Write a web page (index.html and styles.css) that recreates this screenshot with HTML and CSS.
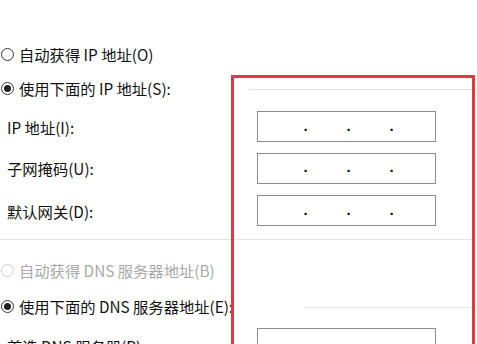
FILE: index.html
```html
<!DOCTYPE html>
<html lang="zh-CN">
<head>
<meta charset="utf-8">
<link rel="stylesheet" href="styles.css">
</head>
<body>
<div class="page">
  <div class="row r1">
    <span class="radio"></span><span class="txt">自动获得 IP 地址(O)</span>
  </div>
  <div class="row r2">
    <span class="radio on"></span><span class="txt">使用下面的 IP 地址(S):</span>
    <span class="rule rule-ip"></span>
  </div>
  <div class="row field r3">
    <span class="label">IP 地址(I):</span>
    <div class="ipbox"><span>.</span><span>.</span><span>.</span></div>
  </div>
  <div class="row field r4">
    <span class="label">子网掩码(U):</span>
    <div class="ipbox"><span>.</span><span>.</span><span>.</span></div>
  </div>
  <div class="row field r5">
    <span class="label">默认网关(D):</span>
    <div class="ipbox"><span>.</span><span>.</span><span>.</span></div>
  </div>
  <div class="sep"></div>
  <div class="row r6 disabled">
    <span class="radio"></span><span class="txt">自动获得 DNS 服务器地址(B)</span>
  </div>
  <div class="row r7">
    <span class="radio on"></span><span class="txt">使用下面的 DNS 服务器地址(E):</span>
    <span class="rule rule-dns"></span>
  </div>
  <div class="row field r8">
    <span class="label">首选 DNS 服务器(P):</span>
    <div class="ipbox"><span></span><span></span><span></span></div>
  </div>
  <div class="highlight"></div>
</div>
</body>
</html>
```

FILE: styles.css
```css
html, body {
  margin: 0;
  padding: 0;
  background: #ffffff;
}
body {
  font-family: "Noto Sans CJK SC", "Noto Sans", sans-serif;
  font-size: 15.3px;
  color: #111111;
  width: 477px;
  height: 344px;
  overflow: hidden;
}
.page {
  position: relative;
  padding-top: 37px;
}
.row {
  display: flex;
  align-items: center;
  white-space: nowrap;
}
.r1 { height: 34px; }
.r2 { height: 34px; }
.r3 { height: 43px; }
.r4 { height: 40px; }
.r5 { height: 45px; }
.r6 { height: 40px; margin-top: 10px; }
.r7 { height: 32px; }
.r8 { height: 31px; margin-top: 6px; align-items: flex-start; }
.r8 .label { margin-top: 7px; }

.radio {
  width: 13px;
  height: 13px;
  box-sizing: border-box;
  border: 1px solid #333;
  border-radius: 50%;
  margin-left: 1px;
  margin-right: 5px;
  display: flex;
  align-items: center;
  justify-content: center;
  flex: none;
}
.radio.on::after {
  content: "";
  width: 7px;
  height: 7px;
  border-radius: 50%;
  background: #222;
}
.disabled .radio { border-color: #cfcfcf; }
.disabled .txt { color: #a8a8a8; }

.label {
  width: 250px;
  padding-left: 7px;
  flex: none;
}
.ipbox {
  width: 179px;
  height: 31px;
  box-sizing: border-box;
  border: 1px solid #8c8c8c;
  display: flex;
  padding-left: 26px;
  align-items: center;
  flex: none;
}
.ipbox span {
  width: 43px;
  text-align: center;
  font-family: "Liberation Sans", sans-serif;
  font-size: 15px;
  font-weight: bold;
  line-height: 1;
  color: #111;
  padding-bottom: 3px;
}
.rule {
  height: 1px;
  background: #e3e3e3;
  flex: none;
}
.rule-ip {
  margin-left: auto;
  width: 228px;
  margin-top: 2px;
}
.rule-dns {
  margin-left: auto;
  width: 172px;
  margin-top: 2px;
}
.sep {
  height: 1px;
  background: #e3e3e3;
  margin-top: 6px;
  width: 472px;
}
.highlight {
  position: absolute;
  left: 231px;
  top: 75px;
  width: 244px;
  height: 300px;
  box-sizing: border-box;
  border: 3px solid #e4383e;
}
```
